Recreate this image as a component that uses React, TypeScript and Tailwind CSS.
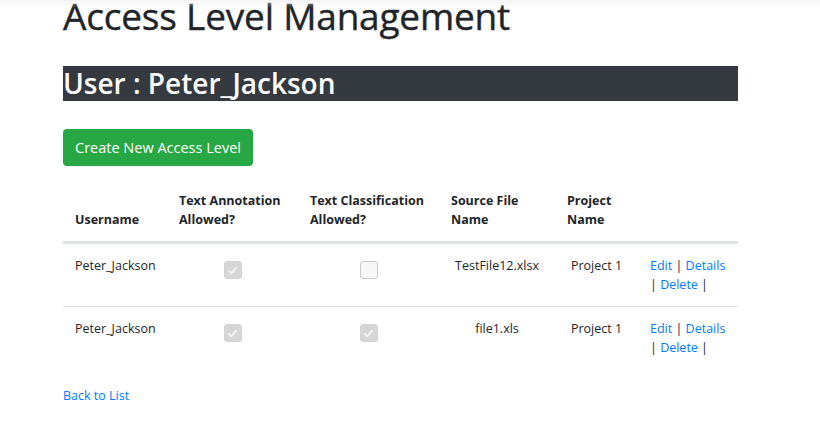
import React from "react";

type Row = {
  user: string;
  annotation: boolean;
  classification: boolean;
  file: string;
  project: string;
};

const ROWS: Row[] = [
  { user: "Peter_Jackson", annotation: true, classification: false, file: "TestFile12.xlsx", project: "Project 1" },
  { user: "Peter_Jackson", annotation: true, classification: true, file: "file1.xls", project: "Project 1" },
];

function Box({ on }: { on: boolean }) {
  return (
    <span
      className={`mx-auto mt-[5px] flex h-[18px] w-[18px] items-center justify-center rounded-[3px] border ${
        on ? "border-[#d3d3d3] bg-[#d6d6d6]" : "border-[#c9c9c9] bg-[#f7f7f7]"
      }`}
    >
      {on && (
        <svg viewBox="0 0 16 16" className="h-[13px] w-[13px]" fill="none" stroke="#f4f4f4" strokeWidth="2.2" strokeLinecap="round" strokeLinejoin="round">
          <path d="M3.5 8.5l3 3 6-7" />
        </svg>
      )}
    </span>
  );
}

export default function App() {
  return (
    <div className="relative min-h-[432px] bg-white font-['Open_Sans',sans-serif] text-[#212529]">
      {/* navbar shadow bleeding over the top */}
      <div className="pointer-events-none absolute inset-x-0 top-0 z-10 h-[14px] bg-gradient-to-b from-[#ececec] to-white/0" />

      <div className="ml-[63px] w-[675px]">
        <h1 className="-mt-[6px] text-[37px] leading-[1.2] tracking-[-0.2px] [-webkit-text-stroke:0.4px_#212529]">
          Access Level Management
        </h1>

        <h2 className="mt-[28px] bg-[#343a40] text-[28px] font-semibold leading-[35px] text-white">User : Peter_Jackson</h2>

        <button className="mt-[28px] h-[37px] rounded-[4px] bg-[#28a745] px-[12px] text-[14.5px] text-white">
          Create New Access Level
        </button>

        <table className="mt-[13px] w-full table-fixed border-collapse text-[12.5px] leading-[19px]">
          <thead>
            <tr className="border-b-[3px] border-[#dee2e6] align-bottom font-bold">
              <th className="w-[104px] p-[12px] text-left">Username</th>
              <th className="w-[131px] p-[12px] text-left">Text Annotation Allowed?</th>
              <th className="w-[141px] p-[12px] text-left">Text Classification Allowed?</th>
              <th className="w-[116px] p-[12px] text-left">Source File Name</th>
              <th className="w-[83px] p-[12px] text-left">Project Name</th>
              <th className="w-[100px] p-[12px]" />
            </tr>
          </thead>
          <tbody>
            {ROWS.map((r, i) => (
              <tr key={i} className={`align-top ${i > 0 ? "border-t border-[#dee2e6]" : ""}`}>
                <td className="p-[12px]">{r.user}</td>
                <td className="p-[12px]"><Box on={r.annotation} /></td>
                <td className="p-[12px]"><Box on={r.classification} /></td>
                <td className="p-[12px] text-center">{r.file}</td>
                <td className="p-[12px] text-center">{r.project}</td>
                <td className="p-[12px]">
                  <a className="text-[#007bff]">Edit</a> | <a className="text-[#007bff]">Details</a> |{" "}
                  <a className="text-[#007bff]">Delete</a> |
                </td>
              </tr>
            ))}
          </tbody>
        </table>

        <div className="mt-[17px] text-[12.5px] leading-[19px]">
          <a className="text-[#007bff]">Back to List</a>
        </div>
      </div>
    </div>
  );
}
